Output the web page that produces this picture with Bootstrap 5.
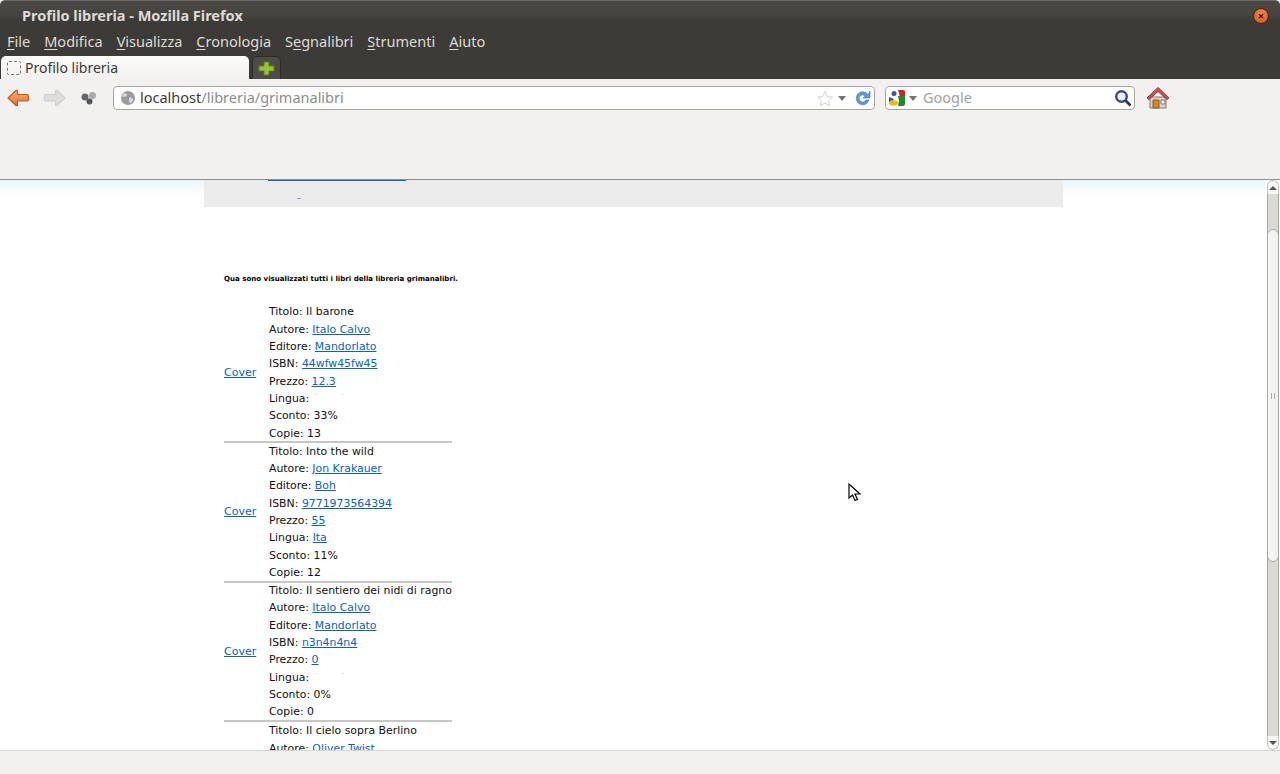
<!DOCTYPE html>
<html lang="it">
<head>
<meta charset="utf-8">
<title>Profilo libreria</title>
<link href="https://cdn.jsdelivr.net/npm/bootstrap@5.3.0/dist/css/bootstrap.min.css" rel="stylesheet">
<style>
html,body{height:774px;overflow:hidden;background:#f2f1f0}
.ff-win{height:774px;width:1280px;font-family:"Noto Sans","Open Sans",sans-serif}
.ff-title{height:30px;flex:none;background:linear-gradient(#4a4945 0,#45443f 14px,#3c3b37 20px);border-top:1px solid #6b6a66;border-radius:5px 5px 0 0;color:#dfdbd2;font-weight:700;font-size:14.5px;padding-left:22px}
.ff-close{width:16px;height:16px;border-radius:50%;background:radial-gradient(circle at 50% 35%,#f58a4e,#dd4a14);margin-right:11px;border:1px solid #3a2a20;color:#3b1505;font-size:11px;line-height:13px;text-align:center}
.ff-menu{height:25px;flex:none;background:#3c3b37;color:#dfdbd2;font-size:14.5px;padding:0 0 2px 7px;gap:14px}
.ff-menu u{text-underline-offset:2px}
.ff-tabs{height:24px;flex:none;background:#3c3b37;padding-left:1px;gap:3px}
.ff-tab{width:248px;height:23px;background:linear-gradient(#fbfbfa,#f2f1f0);border-radius:5px 5px 0 0;color:#3c3b37;font-size:14px;padding-left:6px;gap:4px}
.ff-fav{width:14px;height:14px;border:1px dashed #777;border-radius:2px}
.ff-newtab{width:29px;height:23px;background:#4d4c47;border:1px solid #2c2b28;border-bottom:0;border-radius:5px 5px 0 0}
.ff-tool{height:101px;flex:none;background:#f2f1f0;border-bottom:1px solid #8f8f8f;padding:7px 0 0 6px}
.ff-row{height:24px}
.ff-url{width:762px;height:24px;margin-left:16px;background:#fff;border:1px solid #a9a6a1;border-radius:4px;font-size:14.5px;padding:0 3px 0 6px;color:#3c3b37}
.ff-path{color:#8d8d8a}
.ff-search{width:250px;height:24px;margin-left:10px;background:#fff;border:1px solid #a9a6a1;border-radius:4px;font-size:14.5px;color:#a3a19d;padding:0 2px 0 3px}
.ff-caret{width:0;height:0;border-left:4px solid transparent;border-right:4px solid transparent;border-top:5px solid #77746f}
.ff-goog{margin-left:6px}
.ff-fwd{margin-left:13px}
.ff-gear{margin-left:14px}
.ff-home{margin-left:11px}
.ff-view{height:570px;flex:none;min-height:0}
.ff-page{flex:1;min-width:0;overflow:hidden;background:linear-gradient(#eaf6fc 0,#fff 16px);font-family:"DejaVu Sans",sans-serif;color:#111}
.ff-band{height:27px;width:859px;margin-left:204px;background:#ebebeb;overflow:hidden}
.ff-tabline{width:138px;height:1px;background:#0a6ad0;margin-left:64px}
.ff-dash{width:4px;height:1px;background:#8aa6c8;margin:17px 0 0 93px}
.ff-body{background:#fff;padding:67px 0 0 224px;width:1063px}
.ff-intro{font-size:7.05px;font-weight:700;line-height:10px;margin:0 0 20px;color:#000}
.ff-item{width:228px;height:139.33px;border-bottom:2px solid #c6c6c6;font-size:10.9px;line-height:17.33px}
.ff-item a,.ff-cover{color:#0a62c4}
.ff-cover{flex:none;width:45px;font-size:11px}
.ff-lines{flex:none;padding-top:.25px}
.ff-lines div{height:17.33px;white-space:nowrap}
.ff-speck{display:inline-block;width:3px;height:1px;background:#dfeaf6;margin-left:5px;vertical-align:7px}
.ff-bar{width:15px;flex:none;background:#fff;padding:0 1px 0 2px}
.ff-trough{flex:1;background:#dcdad5;border-left:1px solid #aaa8a4;border-right:1px solid #aaa8a4;display:flex;padding:35px 0 174px}
.ff-thumb{flex:1;background:linear-gradient(90deg,#f8f8f7,#f0efed);border:1px solid #aaa8a4;border-radius:7px;margin:0 -1px;display:flex;align-items:center;justify-content:center}
.ff-grip{width:4px;height:6px;border-left:1px solid #aaa;border-right:1px solid #aaa}
.ff-end{height:14px;flex:none;display:flex;align-items:center;justify-content:center;border:1px solid #c4c3bf;background:#f7f7f6}
.ff-endtop{border-radius:7px 7px 0 0;border-bottom:0}
.ff-endbot{border-radius:0 0 7px 7px;border-top:0}
.ff-up{width:0;height:0;border-left:4px solid transparent;border-right:4px solid transparent;border-bottom:4px solid #555}
.ff-down{width:0;height:0;border-left:4px solid transparent;border-right:4px solid transparent;border-top:4px solid #555}
.ff-status{height:24px;flex:none;background:#f2f1f0;border-top:1px solid #d8d6d2}
.ff-cursor{position:absolute;left:848px;top:483px}
</style>
</head>
<body class="m-0">
<div class="ff-win d-flex flex-column">
  <div class="ff-title d-flex align-items-center justify-content-between">
    <span>Profilo libreria - Mozilla Firefox</span>
    <span class="ff-close">×</span>
  </div>
  <div class="ff-menu d-flex align-items-center">
    <span><u>F</u>ile</span><span><u>M</u>odifica</span><span><u>V</u>isualizza</span><span><u>C</u>ronologia</span><span>S<u>e</u>gnalibri</span><span><u>S</u>trumenti</span><span><u>A</u>iuto</span>
  </div>
  <div class="ff-tabs d-flex align-items-end">
    <div class="ff-tab d-flex align-items-center"><span class="ff-fav"></span><span>Profilo libreria</span></div>
    <div class="ff-newtab d-flex align-items-center justify-content-center">
      <svg width="17" height="15" viewBox="0 0 17 15"><path d="M6 1h5v4h5v5h-5v4H6v-4H1V5h5z" fill="#9ac13a" stroke="#5f7f1f"/></svg>
    </div>
  </div>
  <div class="ff-tool">
    <div class="ff-row d-flex align-items-center">
      <svg width="24" height="20" viewBox="0 0 24 20"><defs><linearGradient id="bk" x1="0" y1="0" x2="0" y2="1"><stop offset="0" stop-color="#f6b27a"/><stop offset="1" stop-color="#e26f2c"/></linearGradient></defs><path d="M10 2.500 2 10l8 7.500c1 .5 1.500 0 1.500-1v-3.500H21c1 0 1.500-.5 1.500-1.500V8c0-1-.5-1.500-1.500-1.500h-9.500V3.500c0-1-.5-1.500-1.500-1z" fill="url(#bk)" stroke="#c4591c" stroke-width="1.200" stroke-linejoin="round"/></svg>
      <svg class="ff-fwd" width="24" height="20" viewBox="0 0 24 20"><path d="M14 2.500 22 10l-8 7.500c-1 .5-1.500 0-1.500-1v-3.500H3c-1 0-1.500-.5-1.500-1.500V8c0-1 .5-1.500 1.500-1.500h9.500V3.500c0-1 .5-1.500 1.500-1z" fill="#dedddb" stroke="#d0cecb" stroke-width="1.200" stroke-linejoin="round"/></svg>
      <svg class="ff-gear" width="16" height="14" viewBox="0 0 16 14"><circle cx="4" cy="6" r="3.500" fill="#666"/><circle cx="11.500" cy="4.500" r="3.500" fill="#aaa"/><circle cx="8.500" cy="10.500" r="3" fill="#555"/></svg>
      <div class="ff-url d-flex align-items-center">
        <svg width="16" height="16" viewBox="0 0 16 16"><circle cx="8" cy="8" r="7" fill="#9b9b9b"/><path d="M4 3c2 0 3 1 3 2S5 7 4 7 2 6 2 6zM9 8c2-1 4 0 4 2s-2 3-3 3-1-3-1-5z" fill="#d9d9d9"/></svg>
        <span class="ms-1 flex-grow-1">localhost<span class="ff-path">/libreria/grimanalibri</span></span>
        <svg width="18" height="17" viewBox="0 0 18 17"><path d="m9 1.500 2.300 5 5.200.6-3.900 3.500 1.100 5.200L9 13.200l-4.700 2.600 1.100-5.200L1.500 7.100l5.200-.6z" fill="#fff" stroke="#d4d4d2"/></svg>
        <span class="ff-caret ms-1"></span>
        <svg class="ms-2" width="17" height="17" viewBox="0 0 17 17"><path d="M14 4.500A6.500 6.500 0 1 0 15 10h-3.200a3.500 3.500 0 1 1-.6-4L9 8h7V1z" fill="#5f98d3" stroke="#4178b5" stroke-width=".6"/></svg>
      </div>
      <div class="ff-search d-flex align-items-center">
        <svg width="16" height="16" viewBox="0 0 16 16"><rect width="16" height="16" rx="2" fill="#fff"/><path d="M9 0h5a2 2 0 0 1 2 2v5h-5z" fill="#d8211c"/><path d="M9 6h7v8a2 2 0 0 1-2 2H9l1-5z" fill="#1a8a2e"/><circle cx="5" cy="3.500" r="2.500" fill="#2a5caa"/><path d="M0 7l5 2-2 3-3 0z" fill="#2a5caa"/><ellipse cx="4.500" cy="13" rx="4.500" ry="2.700" fill="#f2b80f"/></svg>
        <span class="ff-caret ms-1"></span>
        <span class="flex-grow-1 ff-goog">Google</span>
        <svg width="18" height="18" viewBox="0 0 18 18"><circle cx="7.500" cy="7.500" r="5.300" fill="#e9eef8" stroke="#2d4c96" stroke-width="2.400"/><path d="m11.500 11.500 5 5" stroke="#333" stroke-width="2.600"/></svg>
      </div>
      <svg class="ff-home" width="24" height="24" viewBox="0 0 24 24"><path d="M4 11h16v11H4z" fill="#d8d6d2" stroke="#7d7a75"/><path d="M1 12 12 1.500 23 12l-2 1.500L12 5.500 3 13.500z" fill="#c9504f" stroke="#9c3a39"/><path d="M7 14h6v8H7z" fill="#d38a1d" stroke="#8f5d10"/><path d="M15 14h4v4h-4z" fill="#eee" stroke="#7d7a75"/></svg>
    </div>
  </div>
  <div class="ff-view d-flex">
    <div class="ff-page">
      <div class="ff-band">
        <div class="ff-tabline"></div>
        <div class="ff-dash"></div>
      </div>
      <div class="ff-body">
        <p class="ff-intro">Qua sono visualizzati tutti i libri della libreria grimanalibri.</p>
        <div class="ff-item d-flex align-items-center">
          <a class="ff-cover" href="#">Cover</a>
          <div class="ff-lines">
            <div>Titolo: Il barone</div>
            <div>Autore: <a href="#">Italo Calvo</a></div>
            <div>Editore: <a href="#">Mandorlato</a></div>
            <div>ISBN: <a href="#">44wfw45fw45</a></div>
            <div>Prezzo: <a href="#">12.3</a></div>
            <div>Lingua:<span class="ff-speck"></span><span class="ff-speck ms-4"></span></div>
            <div>Sconto: 33%</div>
            <div>Copie: 13</div>
          </div>
        </div>
        <div class="ff-item d-flex align-items-center">
          <a class="ff-cover" href="#">Cover</a>
          <div class="ff-lines">
            <div>Titolo: Into the wild</div>
            <div>Autore: <a href="#">Jon Krakauer</a></div>
            <div>Editore: <a href="#">Boh</a></div>
            <div>ISBN: <a href="#">9771973564394</a></div>
            <div>Prezzo: <a href="#">55</a></div>
            <div>Lingua: <a href="#">Ita</a></div>
            <div>Sconto: 11%</div>
            <div>Copie: 12</div>
          </div>
        </div>
        <div class="ff-item d-flex align-items-center">
          <a class="ff-cover" href="#">Cover</a>
          <div class="ff-lines">
            <div>Titolo: Il sentiero dei nidi di ragno</div>
            <div>Autore: <a href="#">Italo Calvo</a></div>
            <div>Editore: <a href="#">Mandorlato</a></div>
            <div>ISBN: <a href="#">n3n4n4n4</a></div>
            <div>Prezzo: <a href="#">0</a></div>
            <div>Lingua:<span class="ff-speck"></span><span class="ff-speck ms-4"></span></div>
            <div>Sconto: 0%</div>
            <div>Copie: 0</div>
          </div>
        </div>
        <div class="ff-item d-flex align-items-start ps-0">
          <span class="ff-cover"></span>
          <div class="ff-lines">
            <div>Titolo: Il cielo sopra Berlino</div>
            <div>Autore: <a href="#">Oliver Twist</a></div>
          </div>
        </div>
      </div>
    </div>
    <div class="ff-bar d-flex flex-column">
      <div class="ff-end ff-endtop"><span class="ff-up"></span></div>
      <div class="ff-trough"><div class="ff-thumb"><span class="ff-grip"></span></div></div>
      <div class="ff-end ff-endbot"><span class="ff-down"></span></div>
    </div>
  </div>
  <div class="ff-status"></div>
</div>
<svg class="ff-cursor" width="13" height="19" viewBox="0 0 13 19"><path d="M1 1v14l3.500-3 2.500 5.500 2.500-1-2.500-5.500H12z" fill="#fff" stroke="#000" stroke-width="1.200"/></svg>
<script src="https://cdn.jsdelivr.net/npm/bootstrap@5.3.0/dist/js/bootstrap.bundle.min.js"></script>
</body>
</html>
